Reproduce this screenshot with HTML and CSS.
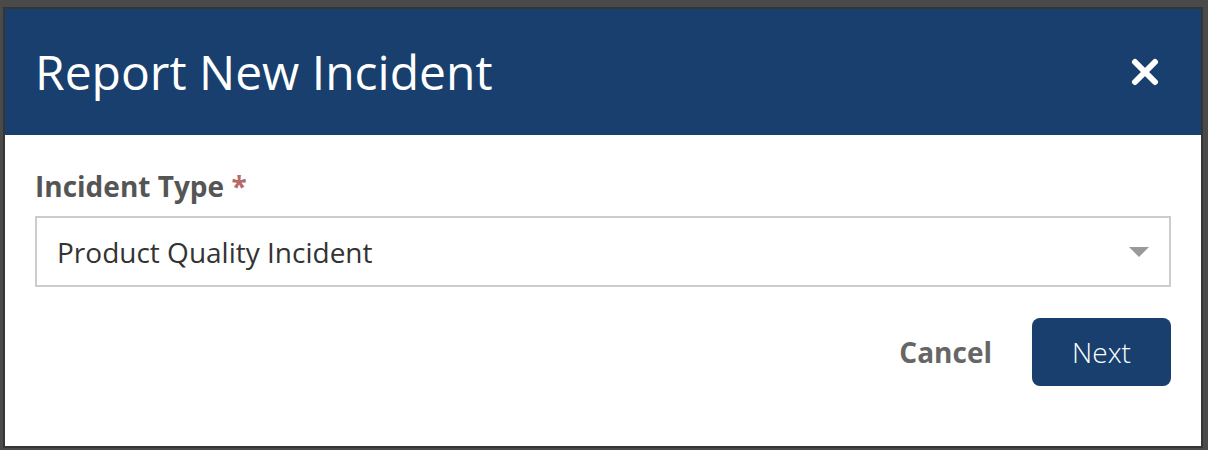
FILE: index.html
```html
<!DOCTYPE html>
<html>
	<head>
		<meta charset="UTF-8">
		<title>Report New Incident</title>
		<link rel="stylesheet" href="styles.css">
	</head>
	<body>
		<div class="overlay">
			<div class="modal">
				<div class="modal-header">
					<h1 class="modal-title">Report New Incident</h1>
					<button class="close" type="button" aria-label="Close">
						<svg width="28" height="28" viewBox="0 0 28 28">
							<path d="M4 4 L24 24 M24 4 L4 24" stroke="#fff" stroke-width="6" stroke-linecap="round" fill="none"/>
						</svg>
					</button>
				</div>
				<div class="modal-body">
					<label class="field-label">Incident Type <span class="req">*</span></label>
					<div class="select">
						<span class="select-value">Product Quality Incident</span>
						<span class="caret"></span>
					</div>
					<div class="actions">
						<button class="btn-cancel" type="button">Cancel</button>
						<button class="btn-next" type="button">Next</button>
					</div>
				</div>
			</div>
		</div>
	</body>
</html>
```

FILE: styles.css
```css
* {
	margin: 0;
	padding: 0;
	box-sizing: border-box;
}

body {
	width: 1208px;
	height: 450px;
	overflow: hidden;
	background: #4a4a4a;
	font-family: "Open Sans", "Noto Sans", sans-serif;
}

.overlay {
	padding: 9px 0 0 5px;
}

.modal {
	width: 1196px;
	height: 437px;
	background: #fff;
	box-shadow: 0 0 0 2px #353535;
}

.modal-header {
	height: 126px;
	background: #183f6d;
	display: flex;
	align-items: center;
	justify-content: space-between;
	padding: 0 42px 0 30px;
}

.modal-title {
	color: #fff;
	font-size: 48px;
	font-weight: 400;
	line-height: 1;
}

.close {
	background: none;
	border: 0;
	display: flex;
}

.modal-body {
	padding: 32px 30px 0 30px;
}

.field-label {
	display: block;
	color: #555;
	font-size: 28px;
	font-weight: 700;
	line-height: 38px;
}

.req {
	color: #b56a6a;
}

.select {
	margin-top: 11px;
	height: 71px;
	border: 2px solid #ccc;
	display: flex;
	align-items: center;
	justify-content: space-between;
	padding: 0 20px 0 20px;
}

.select-value {
	color: #333;
	font-size: 28px;
}

.caret {
	width: 0;
	height: 0;
	border-left: 10px solid transparent;
	border-right: 10px solid transparent;
	border-top: 10px solid #999;
}

.actions {
	display: flex;
	justify-content: flex-end;
	align-items: center;
	gap: 40px;
	margin-top: 31px;
}

.btn-cancel {
	background: none;
	border: 0;
	color: #666;
	font-family: inherit;
	font-size: 28px;
	font-weight: 700;
}

.btn-next {
	width: 139px;
	height: 68px;
	border: 0;
	border-radius: 8px;
	background: #183f6d;
	color: #fff;
	font-family: inherit;
	font-size: 28px;
	font-weight: 300;
}
```
